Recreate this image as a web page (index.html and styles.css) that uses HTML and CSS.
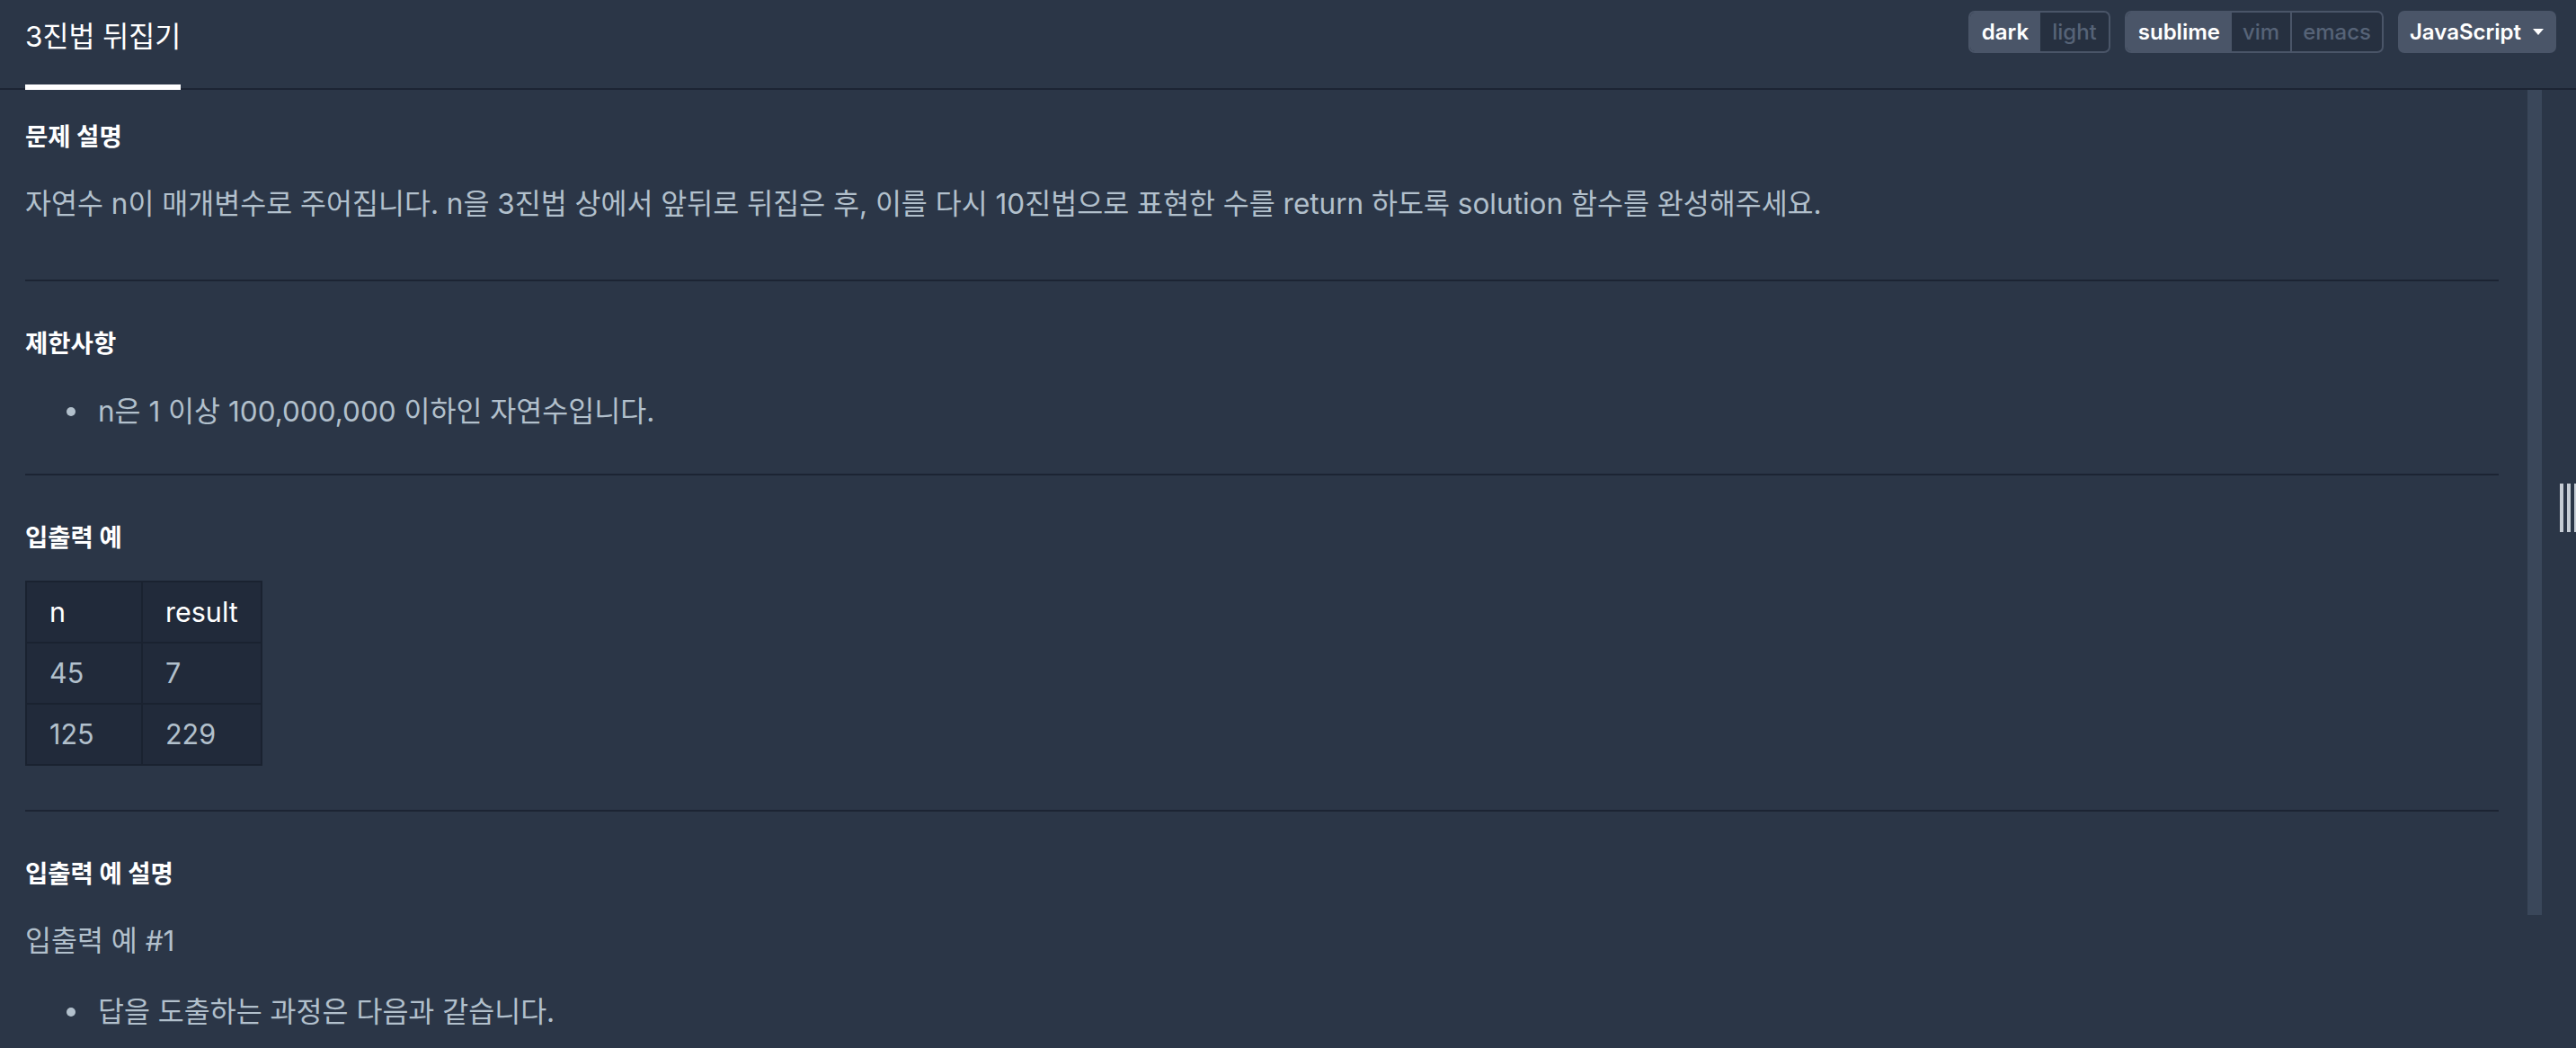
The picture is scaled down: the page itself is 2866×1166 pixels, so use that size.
FILE: index.html
```html
<!DOCTYPE html>
<html lang="ko">
<head>
<meta charset="utf-8">
<title>3진법 뒤집기</title>
<link rel="stylesheet" href="styles.css">
</head>
<body>
<header class="topbar">
  <nav class="tabs">
    <div class="tab">3진법 뒤집기</div>
  </nav>
  <div class="toolbar">
    <div class="seg">
      <span class="seg-item is-active">dark</span>
      <span class="seg-item">light</span>
    </div>
    <div class="seg">
      <span class="seg-item is-active">sublime</span>
      <span class="seg-item seg-tight">vim</span>
      <span class="seg-item seg-tight seg-sep">emacs</span>
    </div>
    <button class="lang-btn" type="button">JavaScript<span class="caret"></span></button>
  </div>
</header>
<main class="workspace">
  <section class="problem">
    <div class="content">
      <div class="section">
        <h5 class="section-title">문제 설명</h5>
        <p class="text">자연수 n이 매개변수로 주어집니다. n을 3진법 상에서 앞뒤로 뒤집은 후, 이를 다시 10진법으로 표현한 수를 return 하도록 solution 함수를 완성해주세요.</p>
      </div>
      <hr class="divider">
      <div class="section">
        <h5 class="section-title">제한사항</h5>
        <ul class="bullets">
          <li>n은 1 이상 100,000,000 이하인 자연수입니다.</li>
        </ul>
      </div>
      <hr class="divider">
      <div class="section">
        <h5 class="section-title tight">입출력 예</h5>
        <table class="io-table">
          <thead>
            <tr><th class="col-n">n</th><th>result</th></tr>
          </thead>
          <tbody>
            <tr><td class="col-n">45</td><td>7</td></tr>
            <tr><td class="col-n">125</td><td>229</td></tr>
          </tbody>
        </table>
      </div>
      <hr class="divider">
      <div class="section">
        <h5 class="section-title">입출력 예 설명</h5>
        <p class="text">입출력 예 #1</p>
        <ul class="bullets">
          <li>답을 도출하는 과정은 다음과 같습니다.</li>
        </ul>
      </div>
    </div>
    <div class="scrollbar"><div class="thumb"></div></div>
  </section>
  <div class="gutter">
    <div class="handle"><span></span><span></span><span></span></div>
  </div>
</main>
</body>
</html>
```

FILE: styles.css
```css
* { box-sizing: border-box; }

html, body {
  margin: 0;
  height: 100%;
}

body {
  background: #2b3647;
  color: #b2c0cc;
  font-family: Inter, "Noto Sans CJK KR", sans-serif;
  overflow: hidden;
}

/* ---------- top bar ---------- */
.topbar {
  height: 100px;
  display: flex;
  justify-content: space-between;
  align-items: flex-start;
  box-shadow: inset 0 -2px 0 #1c2433;
}

.tabs { display: flex; }

.tab {
  margin-left: 28px;
  height: 100px;
  padding-top: 18px;
  border-bottom: 6px solid #ffffff;
  font-size: 31.5px;
  line-height: 46px;
  color: #ffffff;
  white-space: nowrap;
}

.toolbar {
  display: flex;
  gap: 16px;
  padding: 12px 22px 0 0;
}

.seg {
  display: flex;
  height: 47px;
  border: 2px solid #4a5568;
  border-radius: 7px;
  overflow: hidden;
  background: #263040;
}

.seg-item {
  padding: 0 13px;
  font-size: 24px;
  line-height: 43px;
  font-weight: 500;
  color: #566377;
}

.seg-item.seg-tight { padding: 0 12px; }

.seg-item.is-active {
  background: #4a5568;
  color: #ffffff;
  font-weight: 600;
}

.seg-sep { border-left: 2px solid #4a5568; }

.lang-btn {
  display: flex;
  align-items: center;
  gap: 13px;
  height: 47px;
  padding: 0 14px 0 13px;
  border: 0;
  border-radius: 7px;
  background: #4a5568;
  color: #ffffff;
  font-family: Inter, sans-serif;
  font-size: 24px;
  font-weight: 600;
  line-height: 47px;
}

.caret {
  width: 0;
  height: 0;
  border-left: 6px solid transparent;
  border-right: 6px solid transparent;
  border-top: 7px solid #ffffff;
}

/* ---------- workspace ---------- */
.workspace {
  display: flex;
  height: calc(100% - 100px);
}

.problem {
  flex: 1;
  min-width: 0;
  display: flex;
  overflow: hidden;
}

.content {
  flex: 1;
  min-width: 0;
  padding: 32px 32px 0 28px;
}

.scrollbar {
  width: 16px;
  flex: none;
}

.thumb {
  height: 918px;
  background: #3a475a;
}

.gutter {
  width: 38px;
  flex: none;
  padding: 438px 0 0 20px;
}

.handle {
  display: flex;
  gap: 4px;
  height: 54px;
}

.handle span {
  flex: none;
  width: 4px;
  background: #c5ccd4;
}

/* ---------- description ---------- */
.section { display: flow-root; }

.section-title {
  margin: 0 0 32px;
  font-size: 27.5px;
  line-height: 40px;
  font-weight: 700;
  color: #ffffff;
}

.section-title.tight { margin-bottom: 28px; }

.text {
  margin: 0 0 15px;
  font-size: 31.5px;
  line-height: 46px;
}

.bullets {
  margin: 33px 0 0;
  padding: 0 0 0 46px;
  list-style: none;
  font-size: 31.5px;
  line-height: 46px;
}

.bullets li {
  display: flex;
  align-items: center;
}

.bullets li::before {
  content: "";
  flex: none;
  width: 10px;
  height: 10px;
  margin-right: 25px;
  border-radius: 50%;
  background: #b2c0cc;
}

.divider {
  margin: 46px 0 49px;
  height: 2px;
  border: 0;
  background: #1c2433;
}

.io-table {
  border-collapse: collapse;
  margin-bottom: 3px;
  background: #212a3a;
  font-size: 30.5px;
  line-height: 30px;
}

.io-table th,
.io-table td {
  border: 2px solid #1a2230;
  padding: 18px 25px;
  text-align: left;
  font-weight: 400;
}

.io-table th { color: #ffffff; }
.io-table td { color: #b2c0cc; }
.io-table .col-n { width: 129px; }
```
